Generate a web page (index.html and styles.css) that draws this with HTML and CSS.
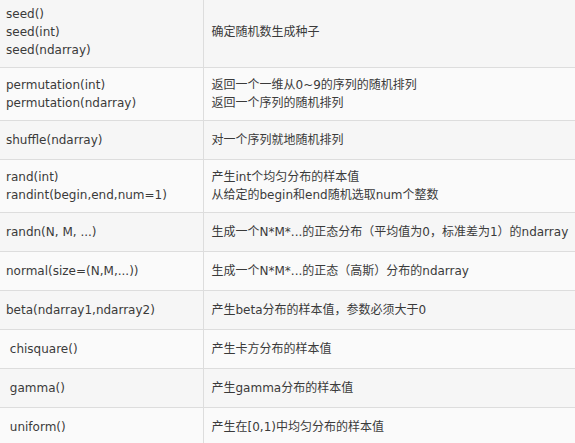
FILE: index.html
```html
<!DOCTYPE html>
<html lang="zh">
<head>
<meta charset="utf-8">
<link rel="stylesheet" href="styles.css">
</head>
<body>
<table class="api">
  <colgroup><col class="c-name"><col class="c-desc"></colgroup>
  <tr class="odd first">
    <td class="name">seed()<br>seed(int)<br>seed(ndarray)</td>
    <td class="desc">确定随机数生成种子</td>
  </tr>
  <tr class="even double">
    <td class="name">permutation(int)<br>permutation(ndarray)</td>
    <td class="desc">返回一个一维从0~9的序列的随机排列<br>返回一个序列的随机排列</td>
  </tr>
  <tr class="odd single">
    <td class="name">shuffle(ndarray)</td>
    <td class="desc">对一个序列就地随机排列</td>
  </tr>
  <tr class="even double">
    <td class="name">rand(int)<br>randint(begin,end,num=1)</td>
    <td class="desc">产生int个均匀分布的样本值<br>从给定的begin和end随机选取num个整数</td>
  </tr>
  <tr class="odd single">
    <td class="name">randn(N, M, ...)</td>
    <td class="desc">生成一个N*M*...的正态分布（平均值为0，标准差为1）的ndarray</td>
  </tr>
  <tr class="even single">
    <td class="name">normal(size=(N,M,...))</td>
    <td class="desc">生成一个N*M*...的正态（高斯）分布的ndarray</td>
  </tr>
  <tr class="odd single">
    <td class="name">beta(ndarray1,ndarray2)</td>
    <td class="desc">产生beta分布的样本值，参数必须大于0</td>
  </tr>
  <tr class="even single">
    <td class="name">&nbsp;chisquare()</td>
    <td class="desc">产生卡方分布的样本值</td>
  </tr>
  <tr class="odd single">
    <td class="name">&nbsp;gamma()</td>
    <td class="desc">产生gamma分布的样本值</td>
  </tr>
  <tr class="even single">
    <td class="name">&nbsp;uniform()</td>
    <td class="desc">产生在[0,1)中均匀分布的样本值</td>
  </tr>
</table>
</body>
</html>
```
FILE: styles.css
```css
html, body {
  margin: 0;
  padding: 0;
  overflow: hidden;
  background: #ffffff;
}

.api {
  border-collapse: collapse;
  table-layout: fixed;
  width: 575px;
  font-family: "DejaVu Sans", "Noto Sans CJK SC", sans-serif;
  font-size: 12px;
  line-height: 18px;
  color: #3a3a3a;
}

.c-name { width: 203px; }
.c-desc { width: 372px; }

.api td {
  padding: 8px 6px;
  border-bottom: 1px solid #dddddd;
  vertical-align: middle;
  white-space: nowrap;
  overflow: hidden;
}

.api td.name {
  border-right: 1px solid #dddddd;
}

.api td.desc {
  padding-left: 8px;
  padding-right: 0;
}

.api tr.odd td { background: #f6f6f6; }
.api tr.even td { background: #fafafa; }

.api tr.first td {
  padding-top: 5px;
}

.api tr.single { height: 39px; }
.api tr.double { height: 53px; }
```
